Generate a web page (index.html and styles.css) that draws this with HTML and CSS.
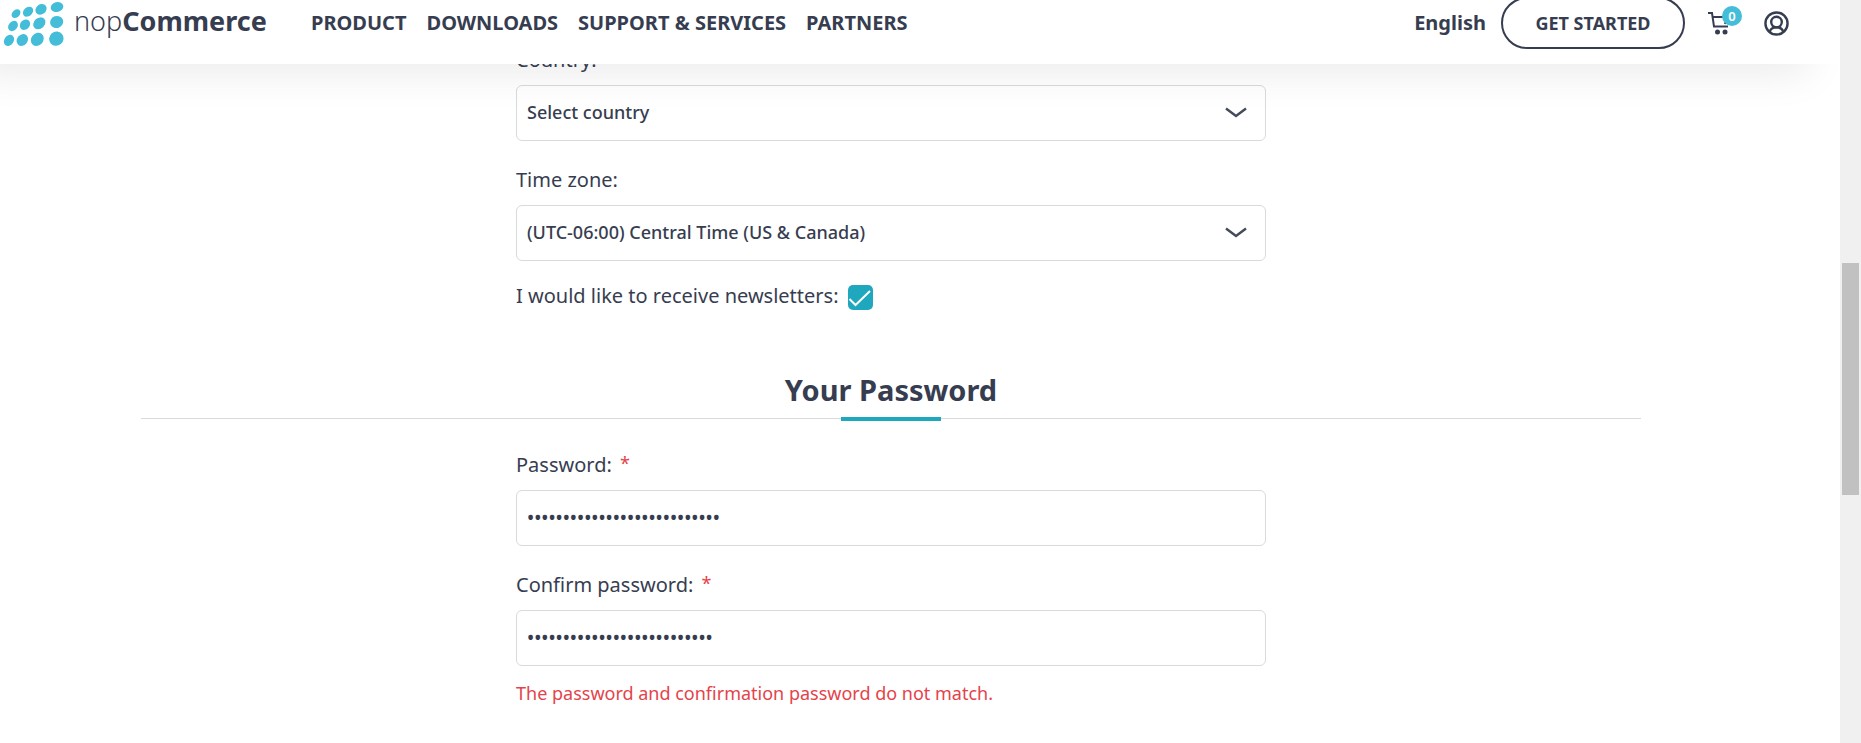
FILE: index.html
```html
<!DOCTYPE html>
<html lang="en">
<head>
<meta charset="utf-8">
<title>Register - nopCommerce</title>
<link rel="stylesheet" href="styles.css">
</head>
<body>
<div class="viewport">
  <div class="page">
    <header class="header">
      <a class="logo" href="#">
        <svg class="logo-mark" viewBox="10 3 184 138" aria-hidden="true">
          <g fill="#43bdd8">
            <ellipse cx="48" cy="41" rx="15" ry="11" transform="rotate(-42 48 41)"/>
            <ellipse cx="84" cy="35" rx="17" ry="13" transform="rotate(-42 84 35)"/>
            <ellipse cx="123" cy="28" rx="18" ry="15" transform="rotate(-38 123 28)"/>
            <ellipse cx="171" cy="21" rx="19" ry="15" transform="rotate(-15 171 21)"/>
            <ellipse cx="39" cy="78" rx="17" ry="13" transform="rotate(-50 39 78)"/>
            <ellipse cx="75" cy="74" rx="17" ry="14" transform="rotate(-48 75 74)"/>
            <ellipse cx="118" cy="70" rx="20" ry="16" transform="rotate(-42 118 70)"/>
            <ellipse cx="170" cy="66" rx="20" ry="18" transform="rotate(-20 170 66)"/>
            <ellipse cx="27" cy="121" rx="18" ry="14" transform="rotate(-55 27 121)"/>
            <ellipse cx="67" cy="120" rx="19" ry="16" transform="rotate(-52 67 120)"/>
            <ellipse cx="112" cy="118" rx="21" ry="18" transform="rotate(-50 112 118)"/>
            <ellipse cx="169" cy="116" rx="22" ry="21" transform="rotate(-40 169 116)"/>
          </g>
        </svg>
        <span class="logo-text">nop<b>Commerce</b></span>
      </a>
      <nav class="nav">
        <a href="#">PRODUCT</a>
        <a href="#">DOWNLOADS</a>
        <a href="#">SUPPORT &amp; SERVICES</a>
        <a href="#">PARTNERS</a>
      </nav>
      <div class="tools">
        <button class="language" type="button">English</button>
        <a class="get-started" href="#">GET STARTED</a>
        <a class="cart" href="#" aria-label="Shopping cart">
          <svg class="cart-icon" viewBox="0 0 24 24" aria-hidden="true">
            <path d="M1 2H5L7 15.500H21M6 6H20L18 13" fill="none" stroke="#373d50" stroke-width="2"/>
            <circle cx="10.500" cy="21" r="2.500" fill="#373d50"/>
            <circle cx="18" cy="21" r="2.500" fill="#373d50"/>
          </svg>
          <span class="cart-count">0</span>
        </a>
        <a class="account" href="#" aria-label="My account">
          <svg class="account-icon" viewBox="0 0 26 26" fill="none" stroke="#373d50" stroke-width="2.500" aria-hidden="true">
            <circle cx="13" cy="13" r="11.500"/>
            <circle cx="13" cy="11.500" r="5.500"/>
            <path d="M6 22C6.500 18.500 9 17 13 17S19.500 18.500 20 22"/>
          </svg>
        </a>
      </div>
    </header>
    <main class="main">
      <form class="form">
        <div class="fields">
          <div class="field">
            <label class="label" for="country">Country:</label>
            <select class="control select" id="country"><option>Select country</option></select>
          </div>
          <div class="field">
            <label class="label" for="timezone">Time zone:</label>
            <select class="control select" id="timezone"><option>(UTC-06:00) Central Time (US &amp; Canada)</option></select>
          </div>
          <div class="check-row">
            <label class="label-inline" for="newsletter">I would like to receive newsletters:</label>
            <input class="checkbox" type="checkbox" id="newsletter" checked>
          </div>
        </div>
        <h2 class="title">Your Password</h2>
        <div class="fields">
          <div class="field">
            <label class="label" for="password">Password: <span class="required">*</span></label>
            <input class="control password" type="password" id="password" value="abcdefghijklmnopqrstuvwxyz1">
          </div>
          <div class="field">
            <label class="label" for="confirm">Confirm password: <span class="required">*</span></label>
            <input class="control password" type="password" id="confirm" value="abcdefghijklmnopqrstuvwxyz">
            <p class="error">The password and confirmation password do not match.</p>
          </div>
        </div>
      </form>
    </main>
  </div>
  <div class="scrollbar"><div class="thumb"></div></div>
</div>
</body>
</html>
```
FILE: styles.css
```css
* { box-sizing: border-box; }
body {
  margin: 0;
  background: #fff;
  color: #373d50;
  font-family: "Noto Sans", "Open Sans", sans-serif;
  font-size: 20px;
}
a { color: inherit; text-decoration: none; }
.viewport { display: flex; height: 100vh; overflow: hidden; }
.page { position: relative; flex: 1; min-width: 0; overflow: hidden; }
.header {
  position: absolute;
  inset: 0 0 auto 0;
  z-index: 2;
  display: flex;
  align-items: flex-start;
  height: 64px;
  padding: 0 51px 0 3px;
  background: #fff;
  box-shadow: -30px 10px 40px 0 rgba(0, 0, 0, .08);
}
.logo { display: flex; align-items: center; height: 48px; gap: 9px; width: 308px; }
.logo-mark { width: 62px; height: 46px; }
.logo-text { font-size: 27px; font-weight: 300; line-height: 46px; padding-bottom: 6px; }
.logo-text b { font-weight: 700; }
.nav { display: flex; gap: 20px; font-size: 20px; font-weight: 700; line-height: 46px; white-space: nowrap; }
.tools { display: flex; align-items: center; height: 46px; margin-left: auto; }
.language {
  border: 0; padding: 0; background: none;
  color: inherit; font: 700 20px/46px "Noto Sans", sans-serif;
}
.get-started {
  width: 184px; height: 52px; margin: 0 22px 0 15px;
  border: 2px solid #373d50; border-radius: 26px;
  font-size: 18px; font-weight: 700; line-height: 48px; text-align: center;
}
.cart { position: relative; display: block; width: 34px; height: 24px; margin-right: 23px; }
.cart-icon { width: 24px; height: 24px; display: block; }
.cart-count {
  position: absolute; top: -5px; left: 15px;
  width: 20px; height: 20px; border-radius: 50%;
  background: #43bdd8; color: #fff;
  font-size: 13px; font-weight: 600; line-height: 20px; text-align: center;
}
.account-icon { display: block; width: 25px; height: 25px; }
.main { padding: 46px 199px 0 141px; }
.fields { width: 50%; margin: 0 auto; }
.field { margin-bottom: 25px; }
.label { display: block; margin-bottom: 11px; line-height: 28px; }
.label, .label-inline { font-size: 20px; }
.required { margin-left: 3px; color: #e4434b; font-size: 18px; vertical-align: top; line-height: 24px; }
.control {
  display: block; width: 100%; height: 56px; padding: 0 10px;
  border: 1px solid #d9dadc; border-radius: 6px;
  background: transparent; color: #373d50;
  font: 500 18px "Noto Sans", sans-serif;
}
.password { font-size: 19px; }
.select {
  appearance: none;
  padding-bottom: 2px;
  background: url("data:image/svg+xml,%3Csvg xmlns='http://www.w3.org/2000/svg' viewBox='0 0 22 12'%3E%3Cpath d='M1 1.500L11 9L21 1.500' fill='none' stroke='%23474c5c' stroke-width='2.500'/%3E%3C/svg%3E") no-repeat right 18px center / 22px 12px;
}
.check-row { display: flex; align-items: center; gap: 9px; height: 25px; margin-top: -1px; }
.label-inline { line-height: 24px; padding-bottom: 3px; }
.checkbox {
  appearance: none; width: 25px; height: 25px; margin: 0; border-radius: 5px;
  background: #1fa7bd url("data:image/svg+xml,%3Csvg xmlns='http://www.w3.org/2000/svg' viewBox='0 0 25 25'%3E%3Cpath d='M1.500 14L7.500 20L22 6' fill='none' stroke='white' stroke-width='2'/%3E%3C/svg%3E") center / 25px 25px;
}
.title {
  position: relative; margin: 60px 0 32px; padding-bottom: 8px;
  border-bottom: 1px solid #d9dadc;
  font-size: 29px; font-weight: 700; line-height: 40px; text-align: center;
}
.title::after {
  content: ""; position: absolute; bottom: -3px; left: calc(50% - 50px);
  width: 100px; height: 4px; background: #1fa7bd;
}
.error { margin: 13px 0 0; color: #e4434b; font-size: 18px; line-height: 28px; }
.scrollbar { width: 21px; padding: 0 2px; background: #f0f0f0; display: flex; flex-direction: column; }
.scrollbar::before { content: ""; flex: 263; }
.scrollbar::after { content: ""; flex: 248; }
.thumb { flex: 232; background: #c1c1c1; }
```
